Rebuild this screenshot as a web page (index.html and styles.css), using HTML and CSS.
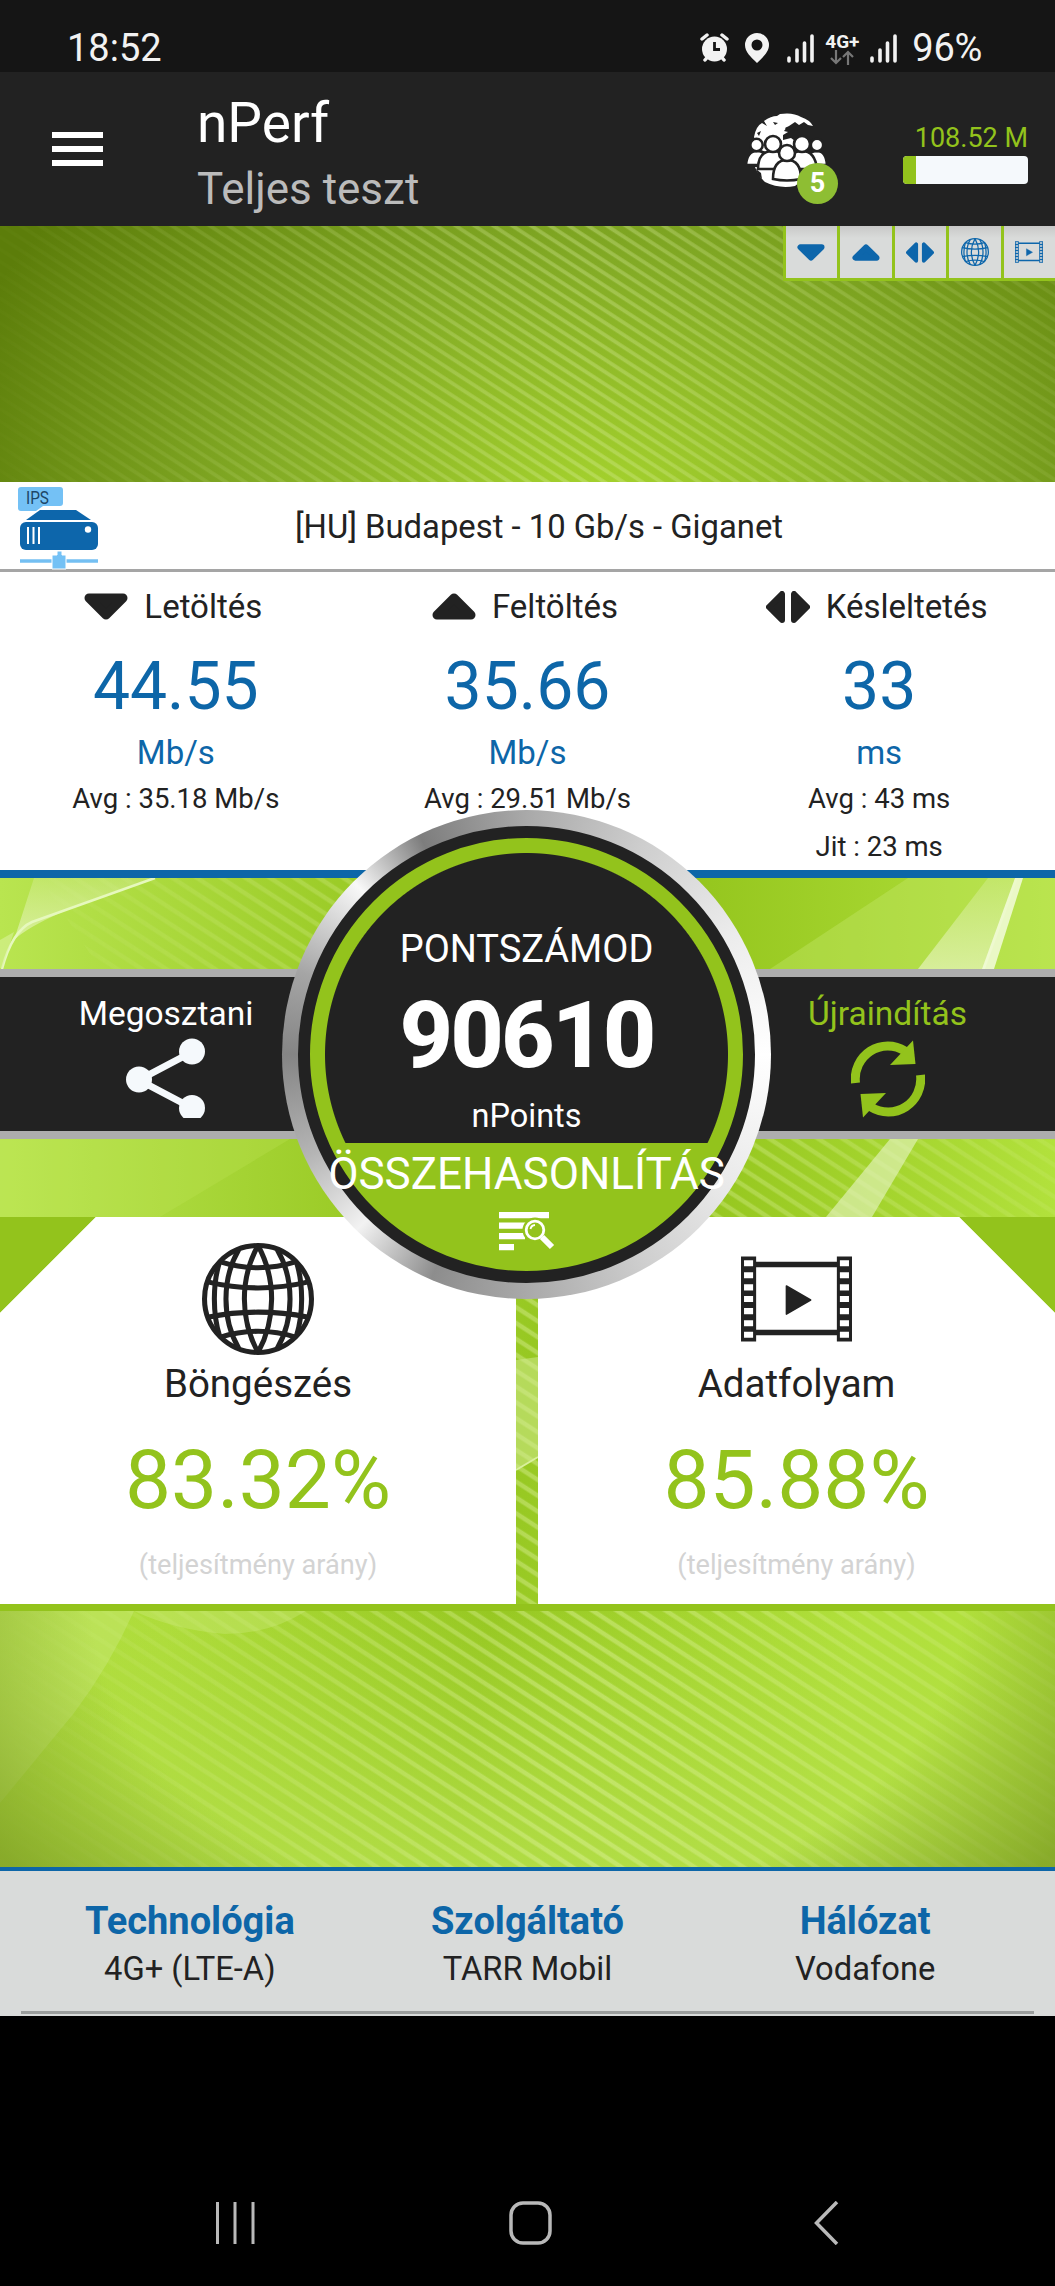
FILE: index.html
```
<!DOCTYPE html>
<html lang="hu">

<head>
  <meta charset="UTF-8" />
  <meta name="viewport" content="width=device-width, initial-scale=1.0" />
  <title>nPerf - Teljes teszt</title>
  <link rel="stylesheet" href="styles.css">
</head>

<body>
  <!-- shared icons -->
  <svg class="sprite" width="0" height="0">
    <symbol id="i-down" viewBox="0 0 44 27">
      <path d="M5 5H39L22 22Z" fill="currentColor" stroke="currentColor" stroke-width="9" stroke-linejoin="round" />
    </symbol>
    <symbol id="i-up" viewBox="0 0 44 27">
      <path d="M5 22H39L22 5Z" fill="currentColor" stroke="currentColor" stroke-width="9" stroke-linejoin="round" />
    </symbol>
    <symbol id="i-latency" viewBox="0 0 44 32">
      <path d="M16 3V29L3 16ZM28 3V29L41 16Z" fill="currentColor" stroke="currentColor" stroke-width="6" stroke-linejoin="round" />
    </symbol>
    <symbol id="i-globe" viewBox="-55.5 -55.5 111 111">
      <g fill="none" stroke="currentColor" stroke-width="5">
        <circle r="53" />
        <path d="M0 -53C-18 -20 -18 20 0 53M0 -53C18 -20 18 20 0 53" />
        <path d="M-19 -49C-36 -20 -36 20 -19 49M19 -49C36 -20 36 20 19 49" />
        <path d="M-38 -37C-45 -15 -45 15 -38 37M38 -37C45 -15 45 15 38 37" />
        <path d="M-38 -37Q0 -25 38 -37M-50 -17Q0 -5 50 -17M-50 18Q0 8 50 18M-38 38Q0 26 38 38" />
      </g>
    </symbol>
    <symbol id="i-film" viewBox="0 0 110 84">
      <path fill="currentColor" fill-rule="evenodd" d="M0 0H15V5H95V0H110V84H95V78H15V84H0ZM15 10.500V72.500H95V10.500ZM3 3.500V9.500H12V3.500ZM3 15.500V21.500H12V15.500ZM3 27.500V33.500H12V27.500ZM3 39V45H12V39ZM3 51V57H12V51ZM3 63V69H12V63ZM3 74.500V80.500H12V74.500ZM98 3.500V9.500H107V3.500ZM98 15.500V21.500H107V15.500ZM98 27.500V33.500H107V27.500ZM98 39V45H107V39ZM98 51V57H107V51ZM98 63V69H107V63ZM98 74.500V80.500H107V74.500Z" />
      <path d="M45 29L69 43L45 57Z" fill="currentColor" stroke="currentColor" stroke-width="1.500" stroke-linejoin="round" />
    </symbol>
    <symbol id="i-signal" viewBox="0 0 27 29">
      <path d="M2 24V27M10 16V27M17.500 9V27M25 2V27" stroke="currentColor" stroke-width="3.600" stroke-linecap="round" />
    </symbol>
  </svg>

  <div class="statusbar">
    <span>18:52</span>
    <div class="status-icons">
      <svg width="29" height="30" viewBox="0 0 29 30">
        <circle cx="14.500" cy="16" r="12.500" fill="currentColor" />
        <path d="M2 6L7 2M27 6L22 2M5 27L7.500 24M24 27L21.500 24" stroke="currentColor" stroke-width="3.500" stroke-linecap="round" />
        <path d="M14.500 9V16.500H20" fill="none" stroke="#151515" stroke-width="2.800" />
      </svg>
      <svg class="s-pin" width="24" height="30" viewBox="0 0 24 30">
        <path fill="currentColor" fill-rule="evenodd" d="M12 0A12 12 0 0 0 0 12C0 19 6 24 12 30C18 24 24 19 24 12A12 12 0 0 0 12 0ZM12 6.500A5.500 5.500 0 1 1 12 17.500A5.500 5.500 0 1 1 12 6.500Z" />
      </svg>
      <svg class="s-sig" width="27" height="29"><use href="#i-signal" /></svg>
      <div class="net">
        <b>4G+</b>
        <svg width="24" height="15" viewBox="0 0 24 15">
          <path d="M6 0V13M1 8L6 13L11 8M18 15V2M13 7L18 2L23 7" fill="none" stroke="#777" stroke-width="2.200" />
        </svg>
      </div>
      <svg class="s-sig2" width="27" height="29"><use href="#i-signal" /></svg>
      <span class="battery">96%</span>
    </div>
  </div>

  <header>
    <div class="burger"><i></i><i></i><i></i></div>
    <div class="titles">
      <h1>nPerf</h1>
      <p>Teljes teszt</p>
    </div>
    <div class="users">
      <svg width="80" height="74" viewBox="0 0 80 74">
        <path d="M7 24Q9 13 15 10L20 13L17 8Q24 3 30 3L33 1Q46 -1 54 4Q63 7 66 13L61 12L57 9L52 12L48 9L42 13L38 15L41 19L36 22L36 27L44 25L48 28L46 34L30 42L10 36ZM8 54Q12 64 18 69Q32 76 48 73L62 62L20 54Z" fill="#fff" />
        <path d="M37 18L40 14L41 19ZM46 15L54 12L56 15L48 18ZM26 9L31 10L28 12ZM10 20L14 18L12 23Z" fill="#222" />
        <path d="M9 56L14 60L15 66L11 62Z" fill="#222" />
        <g fill="#fff" stroke="#222" stroke-width="2.600">
          <path d="M-1 52Q0 38 10 38Q20 38 21 52ZM59 52Q60 38 70 38Q79 38 80 52Z" />
          <circle cx="9.500" cy="32" r="6.200" /><circle cx="70" cy="32" r="6.200" />
          <path d="M11 56Q11 38 26 38Q40 38 41 56ZM40 56Q41 38 55 38Q68 38 70 56Z" />
          <circle cx="26" cy="31" r="8" /><circle cx="55" cy="31" r="8" />
          <path d="M26 66Q26 47 40 47Q54 47 54 66Q40 69 26 66Z" />
          <circle cx="40" cy="40" r="8" />
        </g>
      </svg>
      <span class="badge">5</span>
    </div>
    <div class="quota">
      <span>108.52 M</span>
      <div class="quota-bar"><i style="width: 10%"></i></div>
    </div>
  </header>

  <main>
    <svg class="wallpaper" width="1055" height="1644" viewBox="0 226 1055 1644">
      <defs>
        <radialGradient id="g-top" gradientUnits="userSpaceOnUse" cx="600" cy="520" r="680" gradientTransform="translate(0 130) scale(1 .75)">
          <stop offset="0" stop-color="#a8d62e" /><stop offset=".5" stop-color="#83ab25" /><stop offset="1" stop-color="#5c7d0a" />
        </radialGradient>
        <linearGradient id="g-mid"><stop offset="0" stop-color="#b9e550" /><stop offset=".32" stop-color="#9ccc28" /><stop offset=".65" stop-color="#94c51d" /><stop offset="1" stop-color="#b2e13c" /></linearGradient>
        <linearGradient id="g-low" x1="0" y1=".2" x2="1" y2=".3"><stop offset="0" stop-color="#b2df40" /><stop offset=".2" stop-color="#aedc3a" /><stop offset=".5" stop-color="#97c822" /><stop offset=".85" stop-color="#b1e03c" /></linearGradient>
        <linearGradient id="g-glow" x1="0" y1="0" x2="0" y2="1"><stop offset="0" stop-color="#b3de48" stop-opacity="0" /><stop offset="1" stop-color="#b3de48" stop-opacity=".9" /></linearGradient>
        <radialGradient id="g-shade" gradientUnits="userSpaceOnUse" cx="527" cy="1600" r="640" gradientTransform="translate(0 480) scale(1 .7)">
          <stop offset=".68" stop-color="#7a9a20" stop-opacity="0" /><stop offset="1" stop-color="#7a9a20" stop-opacity=".75" />
        </radialGradient>
        <linearGradient id="g-sheet" x1="0" y1="0" x2="0" y2="1"><stop offset="0" stop-color="#e0f2ae" stop-opacity=".3" /><stop offset="1" stop-color="#e0f2ae" stop-opacity=".8" /></linearGradient>
        <linearGradient id="g-fade"><stop offset="0" stop-color="#fff" stop-opacity=".05" /><stop offset=".55" stop-color="#fff" /><stop offset="1" stop-color="#fff" stop-opacity=".3" /></linearGradient>
        <pattern id="p-thin" width="40" height="10.300" patternUnits="userSpaceOnUse" patternTransform="rotate(33)">
          <path d="M0 3H40" stroke="#dcefa0" stroke-width="3.600" opacity=".34" />
        </pattern>
        <pattern id="p-wide" width="40" height="13.300" patternUnits="userSpaceOnUse" patternTransform="rotate(33)">
          <path d="M0 4H40" stroke="#e2f5a4" stroke-width="4.500" opacity=".42" />
        </pattern>
        <mask id="m-fade" maskUnits="userSpaceOnUse" x="0" y="226" width="1055" height="1644"><rect y="226" width="1055" height="1644" fill="url(#g-fade)" /></mask>
      </defs>
      <rect y="226" width="1055" height="260" fill="url(#g-top)" />
      <rect y="486" width="1055" height="731" fill="url(#g-mid)" />
      <rect y="1217" width="1055" height="653" fill="url(#g-low)" />
      <rect y="1611" width="1055" height="259" fill="url(#g-glow)" />
      <g mask="url(#m-fade)">
        <rect y="226" width="1055" height="260" fill="url(#p-thin)" />
        <path d="M40 878H360L300 969H100Z" fill="url(#p-wide)" />
        <path d="M700 1139H1055V1217H700Z" fill="url(#p-wide)" />
        <rect y="1217" width="1055" height="653" fill="url(#p-wide)" />
      </g>
      <!-- light sheets -->
      <path d="M34 878H155Q40 915 14 940Z" fill="url(#g-sheet)" />
      <path d="M155 878Q60 912 32 922Q12 931 2 969" fill="none" stroke="#e6f8bd" stroke-width="2.500" />
      <path d="M0 940L14 932L2 968H0Z" fill="#d8f29a" opacity=".6" />
      <path d="M908 878H1055V969H770Z" fill="#c8ea72" opacity=".35" />
      <path d="M988 878H1018L985 969H918Z" fill="url(#g-sheet)" />
      <path d="M1015 878H1023L994 969H982Z" fill="#f3fbdc" opacity=".85" />
      <path d="M0 1139H290L160 1217H0Z" fill="#c2e85c" opacity=".25" />
      <path d="M890 1139H918L872 1217H826Z" fill="#e4f3bd" opacity=".65" />
      <path d="M516 1360L538 1357V1457L516 1470Z" fill="#d4ec94" opacity=".5" />
      <path d="M516 1470L538 1457" stroke="#d9f09c" stroke-width="2" />
      <path d="M0 1611H134Q110 1665 74 1713L0 1803Z" fill="#cdeb80" opacity=".4" />
      <path d="M134 1611H306Q270 1634 225 1634Q175 1630 134 1611Z" fill="#cdeb80" opacity=".35" />
      <rect y="1611" width="1055" height="259" fill="url(#g-shade)" />
    </svg>

    <div class="hero">
      <div class="tabs">
        <span><svg width="28" height="17"><use href="#i-down" /></svg></span>
        <span><svg width="28" height="17"><use href="#i-up" /></svg></span>
        <span><svg width="28" height="21"><use href="#i-latency" /></svg></span>
        <span><svg width="28" height="28"><use href="#i-globe" /></svg></span>
        <span><svg width="28" height="22"><use href="#i-film" /></svg></span>
      </div>
    </div>

    <div class="server">
      <svg width="82" height="84" viewBox="0 0 82 84">
        <path d="M3 1H42Q45 1 45 4V17Q45 20 42 20H25L18 25H3Q0 25 0 22V4Q0 1 3 1Z" fill="#74c1f5" />
        <text x="8" y="18" textLength="23" lengthAdjust="spacingAndGlyphs" class="ips">IPS</text>
        <path d="M22 24H58L73 34H8Z" fill="#0d66ab" />
        <rect x="2" y="36" width="78" height="28" rx="6" fill="#0d66ab" />
        <path d="M10 41V58M15.500 41V58M21 41V58" stroke="#fff" stroke-width="2" />
        <circle cx="70" cy="43.500" r="3.200" fill="#fff" />
        <path d="M2 75H80" stroke="#74bff2" stroke-width="3.500" />
        <path d="M39 65H44V69H48V83H34V69H39Z" fill="#74c1f5" stroke="#fff" stroke-width="1" />
      </svg>
      <p>[HU] Budapest - 10 Gb/s - Giganet</p>
    </div>

    <div class="stats">
      <div class="stat">
        <h2><svg width="44" height="27"><use href="#i-down" /></svg>Letöltés</h2>
        <div class="value">44.55</div>
        <div class="unit">Mb/s</div>
        <div class="avg">Avg : 35.18 Mb/s</div>
      </div>
      <div class="stat">
        <h2><svg width="44" height="27"><use href="#i-up" /></svg>Feltöltés</h2>
        <div class="value">35.66</div>
        <div class="unit">Mb/s</div>
        <div class="avg">Avg : 29.51 Mb/s</div>
      </div>
      <div class="stat">
        <h2><svg width="44" height="32"><use href="#i-latency" /></svg>Késleltetés</h2>
        <div class="value">33</div>
        <div class="unit">ms</div>
        <div class="avg">Avg : 43 ms</div>
        <div class="jit">Jit : 23 ms</div>
      </div>
    </div>

    <div class="actions">
      <div class="action share">
        <span>Megosztani</span>
        <svg width="80" height="80" viewBox="0 0 80 80">
          <path d="M66 14L13 42L66 70" fill="none" stroke="#f5f9fc" stroke-width="7" />
          <g fill="#f5f9fc"><circle cx="66" cy="13.500" r="13" /><circle cx="13" cy="41.500" r="13" /><circle cx="66" cy="70" r="13" /></g>
        </svg>
      </div>
      <div class="action restart">
        <span>Újraindítás</span>
        <svg width="74" height="81" viewBox="0 0 74 81">
          <g id="turn">
            <path d="M4.500 45A32.500 33 0 0 1 54 13" fill="none" stroke="currentColor" stroke-width="9" />
            <path d="M62 2.500L64.500 26L39 27Z" fill="currentColor" />
          </g>
          <use href="#turn" transform="rotate(180 37 41)" />
        </svg>
      </div>

      <!-- score dial, lies over the rows around it -->
      <div class="dial">
        <div class="dial-face">
          <div class="dial-title">PONTSZÁMOD</div>
          <div class="dial-score">90610</div>
          <div class="dial-unit">nPoints</div>
          <div class="dial-compare">ÖSSZEHASONLÍTÁS</div>
          <svg width="56" height="40" viewBox="0 0 56 40">
            <path d="M0 3.200H50M0 13.700H27M0 24.200H26M0 35.200H15" stroke="#fff" stroke-width="6.200" />
            <circle cx="36" cy="18" r="9.500" fill="#93c31c" stroke="#93c31c" stroke-width="6" />
            <circle cx="36" cy="18" r="8.800" fill="none" stroke="#fff" stroke-width="2.800" />
            <path d="M31.500 17A5 5 0 0 1 36 13" fill="none" stroke="#fff" stroke-width="1.800" />
            <path d="M43 25L53 35" stroke="#fff" stroke-width="6" />
          </svg>
        </div>
      </div>
    </div>

    <div class="cards">
      <div class="card card-left">
        <svg width="112" height="112"><use href="#i-globe" /></svg>
        <h3>Böngészés</h3>
        <div class="percent">83.32%</div>
        <small>(teljesítmény arány)</small>
      </div>
      <div class="card card-right">
        <svg width="111" height="112"><use href="#i-film" /></svg>
        <h3>Adatfolyam</h3>
        <div class="percent">85.88%</div>
        <small>(teljesítmény arány)</small>
      </div>
    </div>
  </main>

  <footer>
    <div class="info">
      <div><h4>Technológia</h4><p>4G+ (LTE-A)</p></div>
      <div><h4>Szolgáltató</h4><p>TARR Mobil</p></div>
      <div><h4>Hálózat</h4><p>Vodafone</p></div>
    </div>
  </footer>

  <nav>
    <svg width="39" height="44" viewBox="0 0 39 44"><path d="M1.500 1V43M19 1V43M37 1V43" stroke="#b9b9b9" stroke-width="3" /></svg>
    <svg class="home" width="43" height="44" viewBox="0 0 43 44"><rect x="2" y="2" width="39" height="40" rx="12" fill="none" stroke="#b9b9b9" stroke-width="3.500" /></svg>
    <svg width="25" height="44" viewBox="0 0 25 44"><path d="M23 1L2.500 22L23 43" fill="none" stroke="#b9b9b9" stroke-width="3.500" /></svg>
  </nav>
</body>

</html>
```
FILE: styles.css
```
* {
  box-sizing: border-box;
}

body {
  margin: 0;
  background: #000;
  color: #222;
  font-family: Roboto, sans-serif;
  font-size: 32px;
}

h1, h2, h3, h4, p {
  margin: 0;
  font-weight: 400;
}

svg {
  display: block;
  flex: none;
}

.sprite {
  position: absolute;
}

/* status bar */
.statusbar {
  height: 72px;
  padding: 22px 73px 0 67px;
  background: #151515;
  color: #f2f2f2;
  font-size: 38px;
  line-height: 52px;
  display: flex;
  justify-content: space-between;
}

.status-icons {
  display: flex;
  align-items: center;
  height: 52px;
}

.s-pin {
  margin-left: 16px;
}

.s-sig {
  margin-left: 18px;
}

.net {
  width: 34px;
  margin: 2px 11px 0;
  display: flex;
  flex-direction: column;
  align-items: center;
}

.net b {
  font-size: 19px;
  line-height: 17px;
}

.battery {
  margin-left: 15px;
  letter-spacing: -.3px;
}

/* header */
header {
  height: 154px;
  background: #222;
  color: #fff;
  display: flex;
}

.burger {
  width: 51px;
  margin: 60px 0 0 52px;
  height: 34px;
  display: flex;
  flex-direction: column;
  justify-content: space-between;
}

.burger i {
  height: 6px;
  background: #fff;
}

.titles {
  width: 644px;
  padding: 16px 0 0 94px;
}

.titles h1 {
  font-size: 55px;
  line-height: 70px;
}

.titles p {
  color: #bbb;
  font-size: 44px;
  line-height: 62px;
}

.users {
  position: relative;
  width: 80px;
  margin-top: 41px;
}

.badge {
  position: absolute;
  left: 50px;
  top: 50px;
  width: 41px;
  height: 41px;
  border-radius: 50%;
  background: #8ebe33;
  font-size: 27px;
  font-weight: 700;
  line-height: 41px;
  text-align: center;
}

.quota {
  width: 125px;
  margin: 50px 0 0 76px;
  color: #93c31c;
  font-size: 27px;
  line-height: 32px;
  text-align: right;
}

.quota-bar {
  height: 28px;
  margin-top: 2px;
  border-radius: 4px;
  background: #f5f9fc;
  overflow: hidden;
}

.quota-bar i {
  display: block;
  height: 100%;
  background: #93c31c;
}

/* main */
main {
  position: relative;
  z-index: 0;
}

.wallpaper {
  position: absolute;
  top: 0;
  left: 0;
  z-index: -1;
}

.hero {
  height: 256px;
  display: flex;
  justify-content: flex-end;
}

.tabs {
  height: 55px;
  padding: 0 0 3px 3px;
  background: #93c31c;
  color: #0d66ab;
  display: flex;
  gap: 3px;
}

.tabs span {
  width: 51.500px;
  background: linear-gradient(#c8c8c8, #d9dbda 12px);
  display: flex;
  align-items: center;
  justify-content: center;
}

.server {
  height: 90px;
  background: #fff;
  border-bottom: 3px solid #a5a5a5;
  padding: 4px 0 0 18px;
  display: flex;
}

.server p {
  width: 878px;
  font-size: 32.800px;
  line-height: 82px;
  text-align: center;
}

.ips {
  font-size: 18.500px;
  fill: #1d4666;
}

.stats {
  height: 306px;
  background: #fff;
  border-bottom: 8px solid #0d66a8;
  display: grid;
  grid-template-columns: repeat(3, 1fr);
  text-align: center;
}

.stat h2 {
  display: flex;
  align-items: center;
  justify-content: center;
  gap: 16px;
  padding-right: 5px;
  font-size: 33px;
  line-height: 69px;
}

.value {
  color: #0d66a8;
  font-size: 66px;
  line-height: 91px;
}

.unit {
  color: #0d66a8;
  font-size: 33px;
  line-height: 41px;
}

.avg {
  font-size: 27.500px;
  line-height: 52px;
}

.jit {
  font-size: 27.500px;
  line-height: 44px;
}

/* share / restart row */
.actions {
  position: relative;
  height: 170px;
  margin: 91px 0 78px;
  background: #222;
  border-top: 8px solid #adadad;
  border-bottom: 8px solid #adadad;
  display: flex;
  justify-content: space-between;
}

.action {
  display: flex;
  flex-direction: column;
  align-items: center;
  padding-top: 12px;
  font-size: 33.500px;
  line-height: 50px;
}

.share {
  width: 332px;
  color: #fff;
}

.restart {
  width: 335px;
  color: #93c31c;
}

.action svg {
  margin-top: -1px;
}

.dial {
  position: absolute;
  left: 282px;
  top: -167px;
  width: 489px;
  height: 489px;
  padding: 16px;
  border-radius: 50%;
  background: conic-gradient(#a9a9a9, #cfcfcf 30deg, #ececec 60deg, #fff 90deg, #e8e8e8 125deg, #cfcfcf 150deg, #a9a9a9 180deg, #8d8d8d 203deg, #f2f2f2 224deg, #b5b5b5 245deg, #858585 270deg, #a5a5a5 290deg, #f8f8f8 315deg, #7d7d7d 334deg, #a9a9a9);
}

.dial-face {
  height: 457px;
  padding-top: 76px;
  border: 12px solid #222;
  border-radius: 50%;
  background:
    linear-gradient(transparent 305px, #93c31c 305px),
    radial-gradient(circle, #222 201px, #93c31c 202px);
  color: #fff;
  display: flex;
  flex-direction: column;
  align-items: center;
  white-space: nowrap;
}

.dial-title {
  font-size: 38px;
  line-height: 71px;
}

.dial-score {
  font-size: 93px;
  font-weight: 800;
  line-height: 101px;
  letter-spacing: -2.800px;
}

.dial-unit {
  font-size: 32.500px;
  line-height: 60px;
}

.dial-compare {
  font-size: 44px;
  line-height: 56px;
}

.dial-face svg {
  margin-top: 10px;
}

/* result cards */
.cards {
  height: 394px;
  border-bottom: 7px solid #93c31c;
  display: grid;
  grid-template-columns: 516px 517px;
  gap: 22px;
}

.card {
  padding-top: 26px;
  display: flex;
  flex-direction: column;
  align-items: center;
}

.card-left {
  background: linear-gradient(135deg, #93c31c 67.500px, #fff 68px);
}

.card-right {
  background: linear-gradient(225deg, #93c31c 67.500px, #fff 68px);
}

.card h3 {
  font-size: 38.500px;
  line-height: 58px;
}

.percent {
  color: #93c31c;
  font-size: 82px;
  line-height: 134px;
}

.card small {
  color: #d3d3d3;
  font-size: 27.200px;
  line-height: 36px;
}

/* network info */
footer {
  height: 149px;
  margin-top: 256px;
  padding: 0 21px;
  background: #d9dbda;
  border-top: 4px solid #0d66a8;
}

main + footer {
  position: relative;
}

.info {
  height: 143px;
  padding-top: 28px;
  border-bottom: 3px solid #9b9e9d;
  display: grid;
  grid-template-columns: repeat(3, 1fr);
  text-align: center;
}

.info h4 {
  color: #0d66a8;
  font-size: 38px;
  font-weight: 700;
  line-height: 44px;
}

.info p {
  font-size: 32.700px;
  line-height: 52px;
}

nav {
  height: 269px;
  padding: 185px 216px 0;
  display: flex;
  justify-content: space-between;
}

.home {
  margin-right: 8px;
}
```
